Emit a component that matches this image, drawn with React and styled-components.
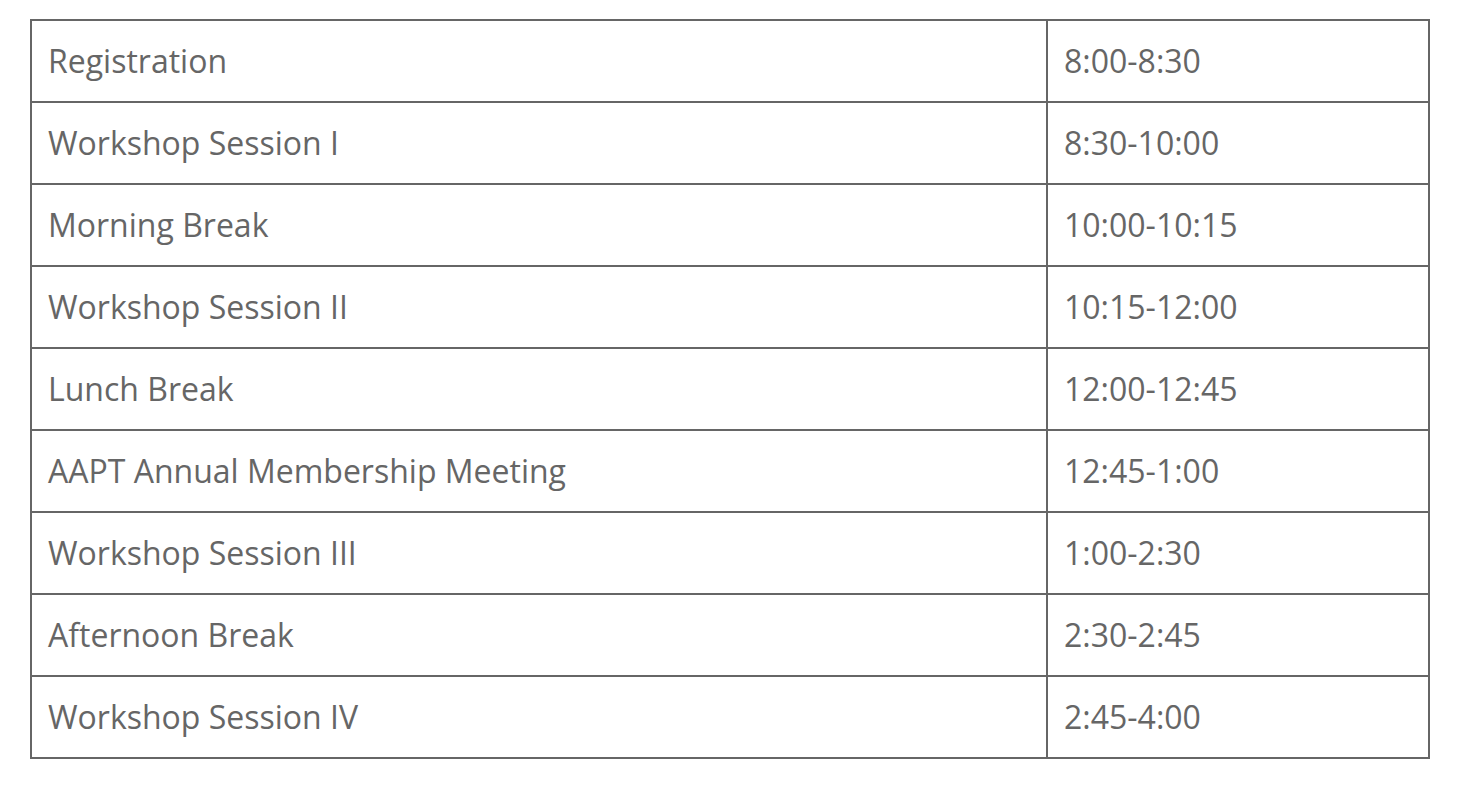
import React from "react";
import styled, { createGlobalStyle } from "styled-components";

const Global = createGlobalStyle`
  html, body { margin: 0; padding: 0; background: #fff; }
  body { font-family: "Open Sans", "Liberation Sans", sans-serif; }
`;

const Page = styled.div`
  padding: 19px 0 0 30px;
`;

const Table = styled.table`
  border-collapse: collapse;
  width: 1400px;
  table-layout: fixed;
  color: #666;
  font-size: 32px;
`;

const Cell = styled.td`
  border: 2px solid #666;
  height: 82px;
  box-sizing: border-box;
  padding: 0 16px;
  vertical-align: middle;
  line-height: 1.4;
  width: ${(p) => (p.$time ? "382px" : "auto")};
`;

const rows = [
  ["Registration", "8:00-8:30"],
  ["Workshop Session I", "8:30-10:00"],
  ["Morning Break", "10:00-10:15"],
  ["Workshop Session II", "10:15-12:00"],
  ["Lunch Break", "12:00-12:45"],
  ["AAPT Annual Membership Meeting", "12:45-1:00"],
  ["Workshop Session III", "1:00-2:30"],
  ["Afternoon Break", "2:30-2:45"],
  ["Workshop Session IV", "2:45-4:00"],
];

export default function App() {
  return (
    <Page>
      <Global />
      <Table>
        <tbody>
          {rows.map(([name, time]) => (
            <tr key={name}>
              <Cell>{name}</Cell>
              <Cell $time>{time}</Cell>
            </tr>
          ))}
        </tbody>
      </Table>
    </Page>
  );
}
